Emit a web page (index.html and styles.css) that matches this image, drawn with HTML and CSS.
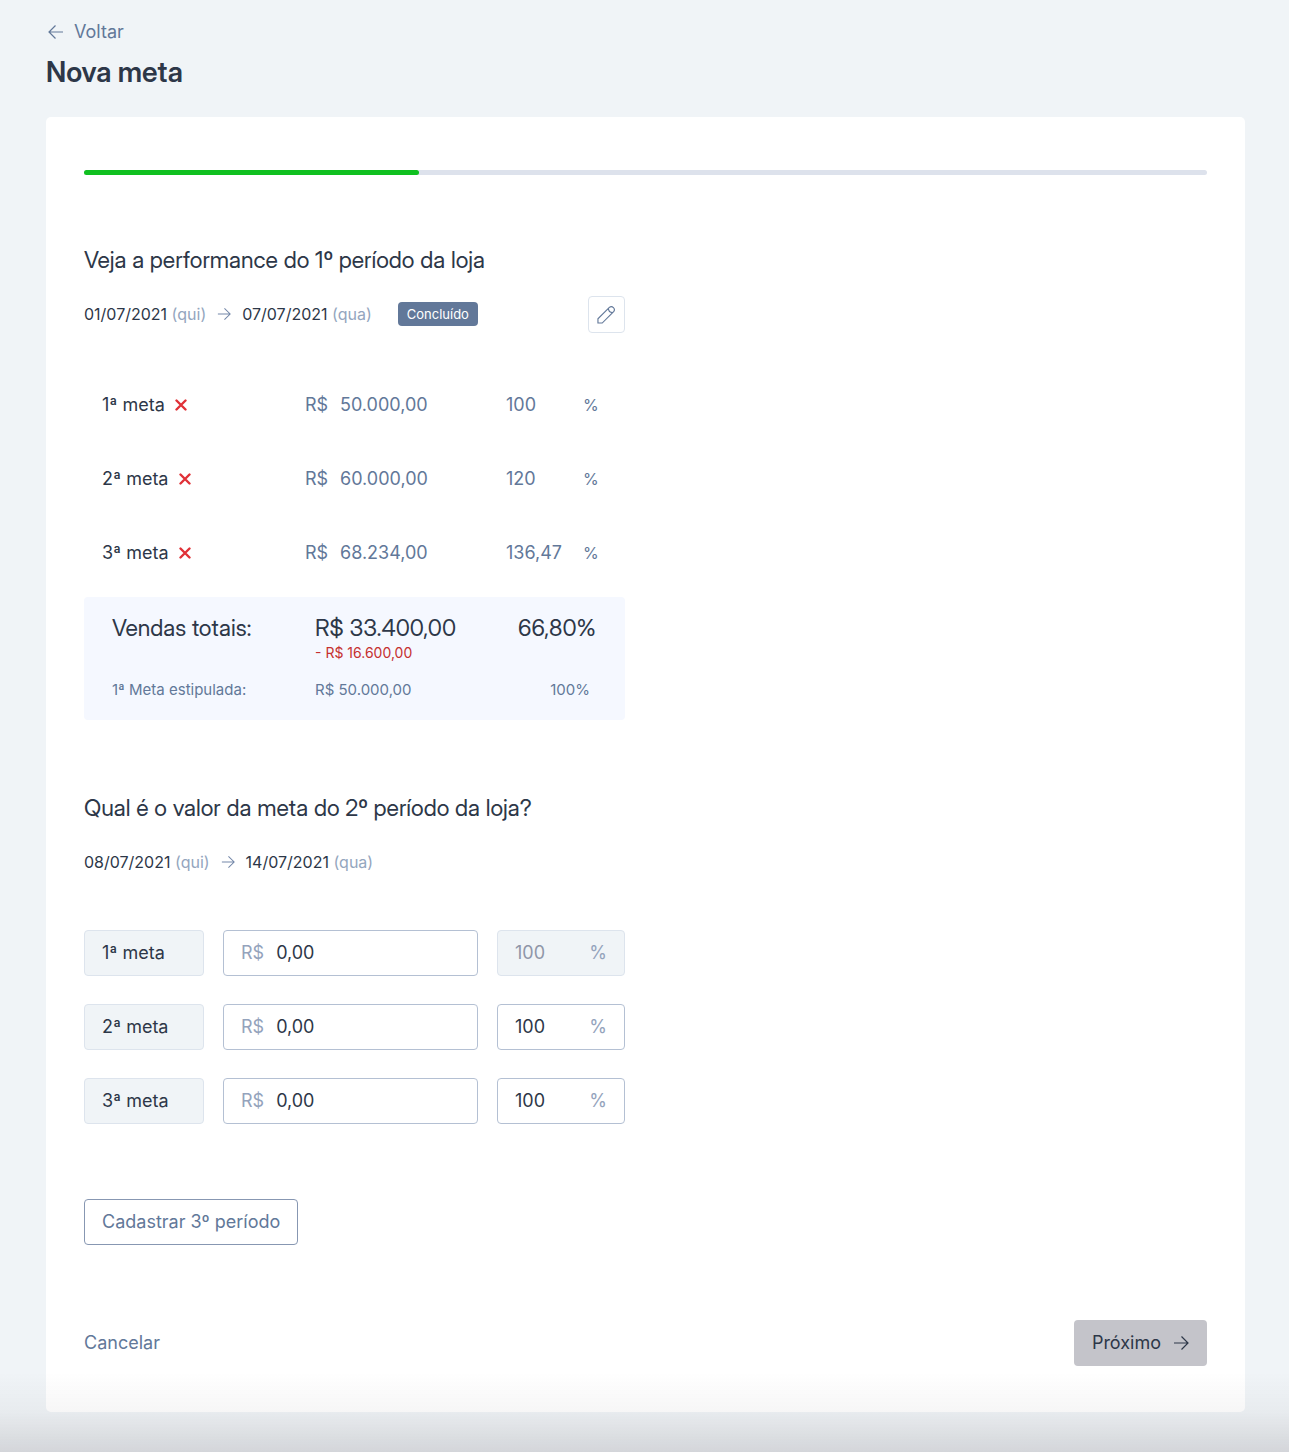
FILE: index.html
```html
<!DOCTYPE html>
<html lang="pt-BR">
  <head>
    <meta charset="utf-8">
    <meta name="viewport" content="width=device-width, initial-scale=1.0">
    <title>Nova meta</title>
    <link rel="stylesheet" href="styles.css">
  </head>

  <body>
    <svg class="symbols" aria-hidden="true">
      <symbol id="arrow" viewBox="0 0 16 16">
        <path d="M1 8h14M8.500 1.500L15 8l-6.500 6.500"/>
      </symbol>
      <symbol id="cross" viewBox="0 0 12 12">
        <path d="M1.500 1.500l9 9M10.500 1.500l-9 9"/>
      </symbol>
    </svg>

    <header class="top">
      <a class="back" href="#">
        <svg class="icon flip"><use href="#arrow"/></svg>
        Voltar
      </a>
      <h1>Nova meta</h1>
    </header>

    <main class="card">
      <div class="progress"><div class="progress-bar"></div></div>

      <section class="period">
        <h2>Veja a performance do 1º período da loja</h2>
        <div class="dates">
          <span>01/07/2021 <small>(qui)</small></span>
          <svg class="icon-small"><use href="#arrow"/></svg>
          <span>07/07/2021 <small>(qua)</small></span>
          <span class="badge">Concluído</span>
          <button class="edit" type="button" aria-label="Editar">
            <svg viewBox="0 0 20 20">
              <path d="M1 19v-4.500L13 2.500a3.200 3.200 0 0 1 4.500 4.500L5.500 19zM12 3.500q0 4.500 4.500 4.500"/>
            </svg>
          </button>
        </div>

        <table class="goals">
          <tr>
            <th scope="row">1ª meta <svg class="cross"><use href="#cross"/></svg></th>
            <td><span class="currency">R$</span>50.000,00</td>
            <td>100</td>
            <td class="percent">%</td>
          </tr>
          <tr>
            <th scope="row">2ª meta <svg class="cross"><use href="#cross"/></svg></th>
            <td><span class="currency">R$</span>60.000,00</td>
            <td>120</td>
            <td class="percent">%</td>
          </tr>
          <tr>
            <th scope="row">3ª meta <svg class="cross"><use href="#cross"/></svg></th>
            <td><span class="currency">R$</span>68.234,00</td>
            <td>136,47</td>
            <td class="percent">%</td>
          </tr>
        </table>

        <div class="totals">
          <div class="total-row">
            <span>Vendas totais:</span>
            <span>R$ 33.400,00</span>
            <span>66,80%</span>
          </div>
          <div class="diff">- R$ 16.600,00</div>
          <div class="target-row">
            <span>1ª Meta estipulada:</span>
            <span>R$ 50.000,00</span>
            <span>100%</span>
          </div>
        </div>
      </section>

      <form class="period">
        <h2>Qual é o valor da meta do 2º período da loja?</h2>
        <div class="dates">
          <span>08/07/2021 <small>(qui)</small></span>
          <svg class="icon-small"><use href="#arrow"/></svg>
          <span>14/07/2021 <small>(qua)</small></span>
        </div>

        <div class="fields">
          <label class="name" for="value1">1ª meta</label>
          <div class="field">
            <label for="value1">R$</label>
            <input id="value1" type="text" value="0,00">
          </div>
          <div class="field disabled">
            <input id="percent1" type="text" value="100" disabled>
            <label for="percent1">%</label>
          </div>

          <label class="name" for="value2">2ª meta</label>
          <div class="field">
            <label for="value2">R$</label>
            <input id="value2" type="text" value="0,00">
          </div>
          <div class="field">
            <input id="percent2" type="text" value="100">
            <label for="percent2">%</label>
          </div>

          <label class="name" for="value3">3ª meta</label>
          <div class="field">
            <label for="value3">R$</label>
            <input id="value3" type="text" value="0,00">
          </div>
          <div class="field">
            <input id="percent3" type="text" value="100">
            <label for="percent3">%</label>
          </div>
        </div>

        <button class="add" type="button">Cadastrar 3º período</button>
      </form>

      <footer class="actions">
        <a href="#">Cancelar</a>
        <button class="next" type="button">
          Próximo
          <svg class="icon"><use href="#arrow"/></svg>
        </button>
      </footer>
    </main>

    <div class="fade"></div>
  </body>
</html>
```

FILE: styles.css
```css
* {
  box-sizing: border-box;
}

body {
  margin: 0;
  padding: 20px 44px 40px 46px;
  background: #f0f4f7;
  color: #2d3748;
  font-family: Inter, "Liberation Sans", sans-serif;
  font-size: 18px;
  line-height: 24px;
}

a {
  color: #627899;
  text-decoration: none;
}

button, input {
  font: inherit;
  color: inherit;
}

svg {
  fill: none;
  stroke: currentColor;
}

.symbols {
  display: none;
}

.icon {
  width: 16px;
  height: 16px;
  stroke-width: 1.2;
}

.flip {
  transform: scaleX(-1);
}

.back {
  display: inline-flex;
  align-items: center;
  gap: 10px;
  padding-left: 2px;
}

h1, h2, .total-row {
  font-family: "Inter Display", Inter, "Liberation Sans", sans-serif;
}

h1 {
  margin: 8px 0 27px;
  font-size: 28px;
  font-weight: 600;
  line-height: 36px;
}

.card {
  padding: 53px 38px 46px;
  background: #fff;
  border-radius: 5px;
}

.progress {
  height: 5px;
  margin-bottom: 70px;
  background: #dde2ec;
  border-radius: 3px;
}

.progress-bar {
  width: 29.8%;
  height: 5px;
  background: #10c020;
  border-radius: 3px;
}

.period {
  max-width: 541px;
  margin-bottom: 73px;
}

h2 {
  margin: 0 0 20px;
  font-size: 23px;
  font-weight: 400;
  line-height: 30px;
}

.dates {
  display: flex;
  align-items: center;
  height: 38px;
  font-size: 16px;
}

.dates small {
  font-size: 16px;
  color: #94a6be;
}

.icon-small {
  width: 14px;
  height: 14px;
  margin: 0 11px;
  color: #7488a9;
  stroke-width: 1.2;
}

.badge {
  margin-left: 26px;
  padding: 0 9px;
  background: #627899;
  border-radius: 4px;
  color: #fff;
  font-size: 13px;
}

.edit {
  width: 37px;
  height: 37px;
  margin-left: auto;
  padding: 8px;
  background: #fff;
  border: 1px solid #dde4ed;
  border-radius: 4px;
  color: #627899;
}

.edit svg {
  display: block;
  width: 19px;
  height: 19px;
  stroke-width: 1.2;
}

.goals {
  width: 100%;
  margin-top: 35px;
  border-collapse: collapse;
  table-layout: fixed;
  color: #627899;
}

.goals th, .goals td {
  width: 201px;
  height: 74px;
  padding: 0 0 0 18px;
  text-align: left;
}

.goals th {
  width: 203px;
  color: #2d3748;
  font-weight: 400;
}

.goals td:nth-child(3) {
  width: 77px;
}

.goals .percent {
  width: 60px;
  font-size: 16px;
}

.currency {
  display: inline-block;
  width: 35px;
}

.cross {
  width: 12px;
  height: 12px;
  margin-left: 5px;
  color: #e03137;
  stroke-width: 2.4;
  stroke-linecap: round;
}

.totals {
  margin-top: 7px;
  padding: 16px 29px 18px 28px;
  background: #f5f8ff;
  border-radius: 4px;
}

.total-row, .target-row {
  display: grid;
  grid-template-columns: 203px 1fr auto;
}

.total-row {
  font-size: 23px;
  line-height: 30px;
}

.diff {
  margin: 0 0 15px 203px;
  color: #c53030;
  font-size: 14px;
  line-height: 20px;
}

.target-row {
  padding-right: 6px;
  color: #627899;
  font-size: 15px;
}

.fields {
  display: grid;
  grid-template-columns: 120px 1fr 128px;
  gap: 28px 19px;
  margin: 49px 0 75px;
}

.name, .field {
  display: flex;
  align-items: center;
  height: 46px;
  padding: 0 17px;
  border: 1px solid #b4c0d3;
  border-radius: 4px;
}

.name, .disabled {
  background: #f0f4f7;
  border-color: #dde4ed;
}

.field {
  gap: 12px;
  min-width: 0;
}

.field label {
  color: #94a3bc;
}

.field input {
  flex: 1;
  min-width: 0;
  padding: 0;
  background: none;
  border: 0;
  outline: 0;
}

.field input:disabled {
  color: #8f96a8;
}

.add {
  height: 46px;
  padding: 0 17px;
  background: #fff;
  border: 1px solid #8797b2;
  border-radius: 4px;
  color: #627899;
}

.actions {
  display: flex;
  align-items: center;
  justify-content: space-between;
  padding-top: 2px;
}

.next {
  display: flex;
  align-items: center;
  gap: 12px;
  height: 46px;
  padding: 0 18px;
  background: #c4c4ca;
  border: 0;
  border-radius: 4px;
}

/* shadow along the bottom edge of the window */
.fade {
  position: fixed;
  right: 0;
  bottom: 0;
  left: 0;
  height: 80px;
  background: linear-gradient(rgba(40, 30, 40, 0), rgba(40, 30, 40, 0.04) 50%, rgba(40, 30, 40, 0.14));
  pointer-events: none;
}
```
